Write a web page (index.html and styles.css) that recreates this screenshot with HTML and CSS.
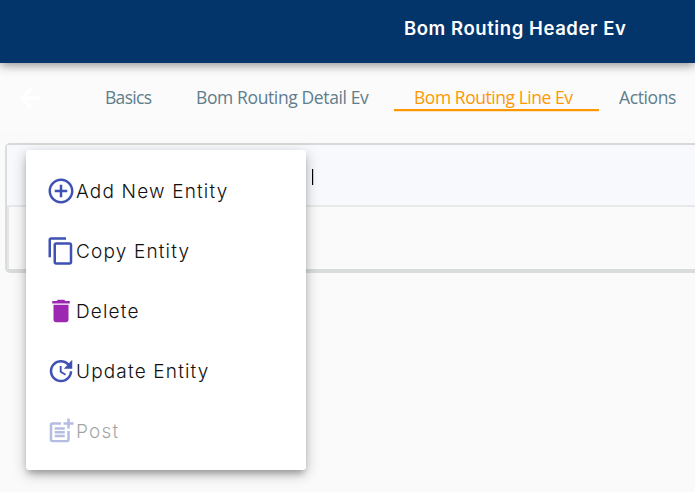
FILE: index.html
```html
<!DOCTYPE html>
<html lang="en">
<head>
<meta charset="utf-8">
<title>Bom Routing Header Ev</title>
<link rel="stylesheet" href="styles.css">
</head>
<body>
<header class="topbar"><h1 class="title">Bom Routing Header Ev</h1></header>
<nav class="tabs">
  <svg class="back" viewBox="0 0 24 24"><path d="M20 11H7.830l5.590-5.590L12 4l-8 8 8 8 1.410-1.410L7.830 13H20z"/></svg>
  <a class="tab basics"><span>Basics</span></a>
  <a class="tab detail"><span>Bom Routing Detail Ev</span></a>
  <a class="tab line active"><span>Bom Routing Line Ev</span></a>
  <a class="tab actions"><span>Actions</span></a>
</nav>
<main class="grid">
  <div class="grid-head"><span class="caret"></span></div>
  <div class="grid-body"></div>
</main>
<div class="menu">
  <div class="item"><svg viewBox="0 0 24 24"><path d="M13 7h-2v4H7v2h4v4h2v-4h4v-2h-4V7zm-1-5C6.480 2 2 6.480 2 12s4.480 10 10 10 10-4.480 10-10S17.520 2 12 2zm0 18c-4.410 0-8-3.590-8-8s3.590-8 8-8 8 3.590 8 8-3.590 8-8 8z"/></svg><span>Add New Entity</span></div>
  <div class="item"><svg viewBox="0 0 24 24"><path d="M16 1H4c-1.100 0-2 .9-2 2v14h2V3h12V1zm3 4H8c-1.100 0-2 .9-2 2v14c0 1.100.9 2 2 2h11c1.100 0 2-.9 2-2V7c0-1.100-.9-2-2-2zm0 16H8V7h11v14z"/></svg><span>Copy Entity</span></div>
  <div class="item"><svg class="trash" viewBox="0 0 24 24"><path d="M6 19c0 1.100.9 2 2 2h8c1.100 0 2-.9 2-2V7H6v12zM19 4h-3.500l-1-1h-5l-1 1H5v2h14V4z"/></svg><span>Delete</span></div>
  <div class="item"><svg viewBox="0 0 24 24"><path d="M21 10.120h-6.780l2.740-2.820c-2.730-2.700-7.150-2.800-9.880-.1-2.730 2.710-2.730 7.080 0 9.790s7.150 2.710 9.880 0C18.320 15.650 19 14.080 19 12.100h2c0 1.980-.88 4.550-2.640 6.290-3.510 3.480-9.210 3.480-12.720 0-3.500-3.470-3.530-9.110-.02-12.580s9.140-3.470 12.650 0L21 3v7.120zM12.500 8v4.250l3.500 2.080-.72 1.210L11 13V8h1.500z"/></svg><span>Update Entity</span></div>
  <div class="item disabled"><svg viewBox="0 0 24 24"><path d="M17 19.220H5V7h7V5H5c-1.100 0-2 .9-2 2v12c0 1.100.9 2 2 2h12c1.100 0 2-.9 2-2v-7h-2v7.220zM19 2h-2v3h-3v2h3v2.990h2V7h3V5h-3V2zM7 9h8v2H7zM7 12v2h8v-2H7zM7 15h8v2H7z"/></svg><span>Post</span></div>
</div>
</body>
</html>
```
FILE: styles.css
```css
* { box-sizing: border-box; }
body {
  margin: 0;
  height: 492px;
  overflow: hidden;
  background: #fafafa;
  font-family: "Open Sans", sans-serif;
}
.topbar {
  position: relative;
  height: 63px;
  padding: 16px 0 0 404px;
  background: #03356b;
  box-shadow: 0 2px 10px rgba(0, 0, 0, .45);
}
.title {
  margin: 0;
  font: 600 18.5px/24px Inter, sans-serif;
  letter-spacing: .58px;
  color: #fff;
  white-space: nowrap;
}
.tabs {
  display: flex;
  align-items: flex-start;
  height: 70px;
  padding: 21px 0 0 15px;
  background: #fbfbfb;
}
.back {
  width: 30px;
  height: 30px;
  margin-top: -1px;
  fill: #fff;
  stroke: #fff;
  stroke-width: .8;
  flex: none;
}
.tab {
  flex: none;
  height: 27px;
  font-size: 17.5px;
  line-height: 26px;
  letter-spacing: -.38px;
  color: #607d8b;
  white-space: nowrap;
}
.basics { width: 71px; margin-left: 40px; padding-left: 20px; letter-spacing: -.7px; }
.detail { width: 213px; margin-left: 20px; padding-left: 20px; }
.line { width: 205px; margin-left: 5px; padding-left: 20px; letter-spacing: -.45px; }
.actions { width: 90px; padding-left: 20px; }
.tab.active { color: #ff9800; border-bottom: 2px solid #ff9800; box-shadow: 0 1px #fde5c0; }
.grid {
  width: 710px;
  height: 130px;
  margin: 10px 0 0 5px;
  border: 2px solid #dadcdd;
  border-top-color: #d8d8d8;
  border-bottom: 4px solid #d9dcdd;
  border-radius: 5px;
  background: #fafafa;
}
.grid-head {
  height: 62px;
  padding: 24px 0 0 305px;
  background: #f7f9fc;
  border-bottom: 2px solid #e7e8e8;
}
.caret { display: block; width: 1px; height: 16px; background: #000; box-shadow: 1px 0 #ccc; }
.grid-body { height: 62px; border-left: 2px solid #e5e5e5; }
.menu {
  position: absolute;
  left: 26px;
  top: 150px;
  width: 280px;
  height: 320px;
  padding: 11px 20px;
  background: #fff;
  border-radius: 3px;
  box-shadow: 0 5px 6px -2px rgba(0, 0, 0, .24), 0 4px 14px rgba(0, 0, 0, .26);
}
.item {
  display: flex;
  align-items: center;
  height: 60px;
  font: 300 19px/30px Inter, sans-serif;
  letter-spacing: 1.17px;
  color: #111;
  white-space: nowrap;
}
.item span { padding-top: 2px; }
.item svg { width: 30px; height: 30px; fill: #3f51b5; flex: none; }
.item .trash { fill: #9c27b0; }
.disabled { opacity: .38; }
```
